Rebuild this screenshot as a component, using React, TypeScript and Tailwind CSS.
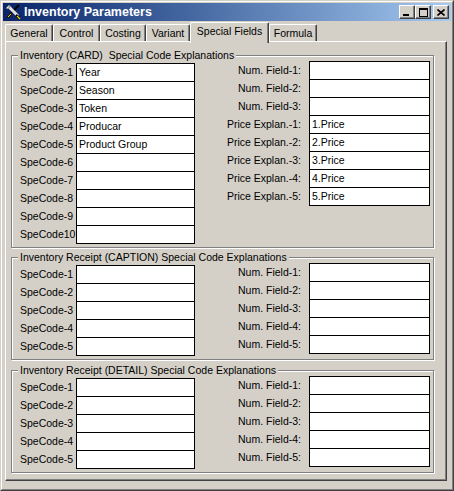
import React from 'react';

const CARD_CODES = ['Year', 'Season', 'Token', 'Producar', 'Product Group', '', '', '', '', ''];
const CARD_NUMS = [
  ['Num. Field-1:', ''],
  ['Num. Field-2:', ''],
  ['Num. Field-3:', ''],
  ['Price Explan.-1:', '1.Price'],
  ['Price Explan.-2:', '2.Price'],
  ['Price Explan.-3:', '3.Price'],
  ['Price Explan.-4:', '4.Price'],
  ['Price Explan.-5:', '5.Price'],
];
const FIVE_CODES = ['', '', '', '', ''];
const FIVE_NUMS = [1, 2, 3, 4, 5].map((n) => [`Num. Field-${n}:`, '']);

const TABS = [
  { label: 'General', w: 'w-[48px]' },
  { label: 'Control', w: 'w-[47px]' },
  { label: 'Costing', w: 'w-[46px]' },
  { label: 'Variant', w: 'w-[44px]' },
  { label: 'Special Fields', w: 'w-[79px]', active: true },
  { label: 'Formula', w: 'w-[48px]' },
];

function ToolsIcon() {
  return (
    <svg width="16" height="16" viewBox="0 0 16 16" className="shrink-0">
      {/* screwdriver shaft */}
      <path d="M14 1 L6 9" stroke="#000" strokeWidth="2" />
      {/* wrench */}
      <path d="M3 2 L13 12" stroke="#e0e0e0" strokeWidth="3" />
      <path d="M1 4 L3 2 L5 1 L4 4 L2 5 Z" fill="#e0e0e0" stroke="#606060" strokeWidth="0.6" />
      {/* handle */}
      <path d="M6 9 L2 13 L3 14 L7 10 Z" fill="#f0d000" stroke="#000" strokeWidth="0.8" />
      <path d="M11 11 L14 14" stroke="#000" strokeWidth="2.5" />
      <path d="M12 12 L15 15" stroke="#f0d000" strokeWidth="1.2" />
    </svg>
  );
}

function CaptionButton({ kind }: { kind: 'min' | 'max' | 'close' }) {
  return (
    <div className="relative flex h-[14px] w-[16px] items-center justify-center border-l border-t border-white border-r border-b border-r-[#404040] border-b-[#404040] bg-[#d4d0c8] shadow-[inset_-1px_-1px_0_#808080]">
      {kind === 'min' && <div className="mt-[6px] mr-[2px] h-[2px] w-[6px] bg-black" />}
      {kind === 'max' && <div className="h-[9px] w-[9px] border border-t-2 border-black" />}
      {kind === 'close' && (
        <svg width="8" height="7" viewBox="0 0 8 7">
          <path d="M0.5 0.5 L7.5 6.5 M7.5 0.5 L0.5 6.5" stroke="#000" strokeWidth="1.6" />
        </svg>
      )}
    </div>
  );
}

function Field({ value }: { value: string }) {
  return (
    <div className="h-[18px] border-t border-black bg-white pl-[2px] leading-[17px] text-black whitespace-nowrap">
      {value}
    </div>
  );
}

function Group({
  title,
  codes,
  nums,
  className = '',
}: {
  title: string;
  codes: string[];
  nums: string[][];
  className?: string;
}) {
  return (
    <div
      className={`relative w-[423px] border border-[#808080] shadow-[inset_1px_1px_0_#fff,1px_1px_0_#fff] ${className}`}
    >
      <span className="absolute -top-[7px] left-[6px] bg-[#d4d0c8] px-[2px] leading-[13px] whitespace-pre">
        {title}
      </span>
      <div className="flex items-start pt-[5px]">
        <div className="mt-[2px] ml-[8px] flex items-start">
          <div className="w-[56px]">
            {codes.map((_, i) => (
              <div key={i} className="h-[18px] leading-[19px] whitespace-nowrap">
                {i === 9 ? 'SpeCode10' : `SpeCode-${i + 1}`}
              </div>
            ))}
          </div>
          <div className="w-[119px] border-l border-r border-b border-black">
            {codes.map((c, i) => (
              <Field key={i} value={c} />
            ))}
          </div>
        </div>
        <div className="ml-[10px] flex items-start">
          <div className="w-[96px] text-right">
            {nums.map(([l], i) => (
              <div key={i} className="h-[18px] leading-[19px] whitespace-nowrap">
                {l}
              </div>
            ))}
          </div>
          <div className="ml-[8px] w-[121px] border-l border-r border-b border-black">
            {nums.map(([, v], i) => (
              <Field key={i} value={v} />
            ))}
          </div>
        </div>
      </div>
    </div>
  );
}

export default function App() {
  return (
    <div className="h-[491px] w-[454px] border border-t-[#d4d0c8] border-l-[#d4d0c8] border-r-[#404040] border-b-[#404040] bg-[#d4d0c8] font-['Liberation_Sans',Arial,sans-serif] text-[10.5px] text-black">
      <div className="h-full border border-t-white border-l-white border-r-[#808080] border-b-[#808080] p-px">
        {/* title bar */}
        <div className="flex h-[18px] items-center bg-linear-to-r from-[#0a246a] to-[#a6caf0] pl-[2px] pr-[2px]">
          <ToolsIcon />
          <span className="ml-[3px] text-[12.5px] font-bold leading-[18px] text-white">
            Inventory Parameters
          </span>
          <div className="ml-auto flex items-center">
            <CaptionButton kind="min" />
            <CaptionButton kind="max" />
            <div className="ml-[2px]">
              <CaptionButton kind="close" />
            </div>
          </div>
        </div>

        {/* tab strip */}
        <div className="mt-px flex h-[19px] items-end pl-[2px]">
          {TABS.map((t) =>
            t.active ? (
              <div
                key={t.label}
                className={`relative z-10 -mb-[2px] flex h-[21px] ${t.w} items-start justify-center rounded-t-[2px] border-l border-t border-r border-white border-r-[#404040] bg-[#d4d0c8] pt-[2px] leading-[13px] shadow-[inset_-1px_0_0_#808080]`}
              >
                {t.label}
              </div>
            ) : (
              <div
                key={t.label}
                className={`flex h-[17px] ${t.w} items-start justify-center rounded-t-[2px] border-l border-t border-r border-white border-r-[#404040] pt-[2px] leading-[13px] shadow-[inset_-1px_0_0_#808080]`}
              >
                {t.label}
              </div>
            ),
          )}
        </div>

        {/* tab page */}
        <div className="ml-[2px] h-[440px] w-[442px] border border-t-white border-l-white border-r-[#404040] border-b-[#404040] pl-[5px] pt-[13px] shadow-[inset_-1px_-1px_0_#808080]">
          <Group
            title="Inventory (CARD)  Special Code Explanations"
            codes={CARD_CODES}
            nums={CARD_NUMS}
            className="h-[193px]"
          />
          <Group
            title="Inventory Receipt (CAPTION) Special Code Explanations"
            codes={FIVE_CODES}
            nums={FIVE_NUMS}
            className="mt-[9px] h-[103px]"
          />
          <Group
            title="Inventory Receipt (DETAIL) Special Code Explanations"
            codes={FIVE_CODES}
            nums={FIVE_NUMS}
            className="mt-[10px] h-[103px]"
          />
        </div>
      </div>
    </div>
  );
}
